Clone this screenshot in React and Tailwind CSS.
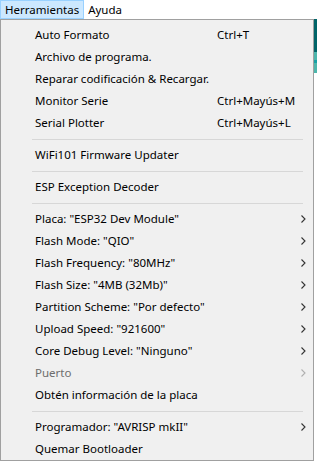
import React from 'react';

const items = [
  { label: 'Auto Formato', shortcut: 'Ctrl+T' },
  { label: 'Archivo de programa.' },
  { label: 'Reparar codificación & Recargar.' },
  { label: 'Monitor Serie', shortcut: 'Ctrl+Mayús+M' },
  { label: 'Serial Plotter', shortcut: 'Ctrl+Mayús+L' },
  { sep: true },
  { label: 'WiFi101 Firmware Updater' },
  { sep: true },
  { label: 'ESP Exception Decoder' },
  { sep: true },
  { label: 'Placa: "ESP32 Dev Module"', sub: true },
  { label: 'Flash Mode: "QIO"', sub: true },
  { label: 'Flash Frequency: "80MHz"', sub: true },
  { label: 'Flash Size: "4MB (32Mb)"', sub: true },
  { label: 'Partition Scheme: "Por defecto"', sub: true },
  { label: 'Upload Speed: "921600"', sub: true },
  { label: 'Core Debug Level: "Ninguno"', sub: true },
  { label: 'Puerto', sub: true, disabled: true },
  { label: 'Obtén información de la placa' },
  { sep: true },
  { label: 'Programador: "AVRISP mkII"', sub: true },
  { label: 'Quemar Bootloader' },
];

function Chevron({ disabled }) {
  return (
    <svg width="5" height="8" viewBox="0 0 5 8" className="mr-[7px]">
      <path d="M0.5 0.5 L4 4 L0.5 7.5" fill="none" stroke={disabled ? '#b0b0b0' : '#333'} strokeWidth="1.1" />
    </svg>
  );
}

function App() {
  return (
    <div
      className="w-[317px] h-[461px] bg-white flex flex-col overflow-hidden text-[11.5px] text-black"
      style={{ fontFamily: '"Noto Sans", "Open Sans", sans-serif' }}
    >
      {/* Menu bar */}
      <div className="h-[19px] flex items-stretch shrink-0">
        <div className="bg-[#cce8ff] border border-[#99d1ff] flex items-center px-[4px] leading-none">
          Herramientas
        </div>
        <div className="flex items-center px-[4px] leading-none">Ayuda</div>
      </div>

      <div className="flex flex-1">
        {/* Dropdown */}
        <div className="w-[314px] bg-[#f0f0f0] border border-[#a0a0a0] pt-[4px] flex flex-col">
          {items.map((it, i) =>
            it.sep ? (
              <div key={i} className="h-[10px] flex items-center pl-[31px] pr-[10px]">
                <div className="h-px w-full bg-[#d7d7d7]" />
              </div>
            ) : (
              <div key={i} className={`h-[22px] flex items-center pl-[34px] ${it.disabled ? 'text-[#6d6d6d]' : ''}`}>
                <span className="w-[182px] whitespace-nowrap">{it.label}</span>
                {it.shortcut && <span className="whitespace-nowrap">{it.shortcut}</span>}
                {it.sub && (
                  <span className="ml-auto flex items-center">
                    <Chevron disabled={it.disabled} />
                  </span>
                )}
              </div>
            )
          )}
        </div>

        {/* App window peeking out on the right */}
        <div className="flex-1 flex flex-col">
          <div className="h-[33px] bg-[#006468]" />
          <div className="h-[8px] bg-[#4db6ac]" />
          <div className="h-[3px] bg-[#17a1a5]" />
          <div className="h-[10px] bg-[#4db6ac]" />
          <div className="flex-1 bg-white" />
        </div>
      </div>
    </div>
  );
}

export default App;
